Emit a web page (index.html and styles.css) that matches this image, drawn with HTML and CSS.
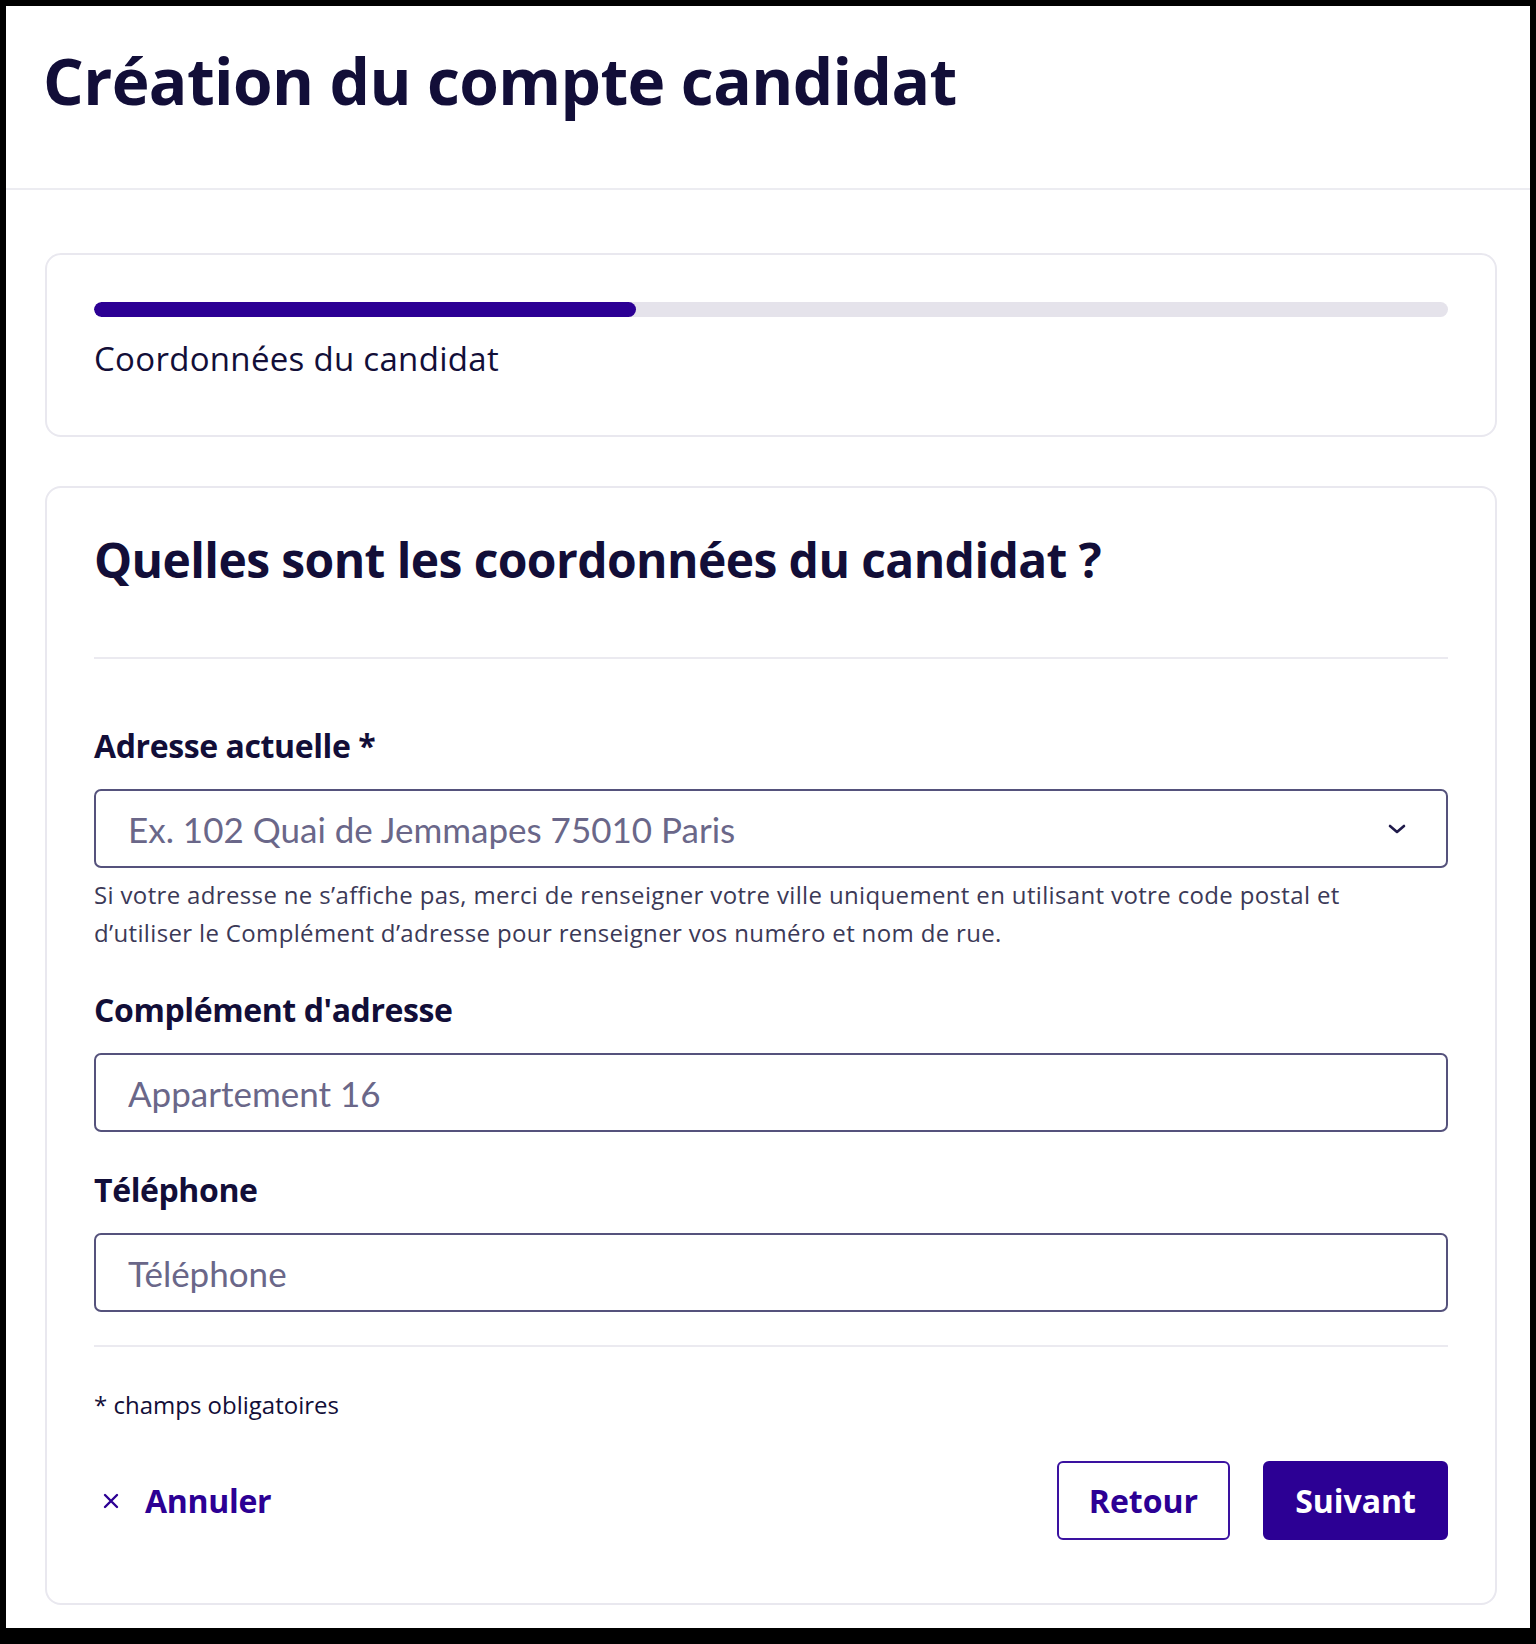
FILE: index.html
```html
<!DOCTYPE html>
<html lang="fr">
<head>
<meta charset="utf-8">
<title>Création du compte candidat</title>
<link rel="stylesheet" href="styles.css">
</head>
<body>
<div class="frame">
  <header class="page-header">
    <h1 class="page-title">Création du compte candidat</h1>
  </header>
  <main class="main">
    <section class="card stepper">
      <div class="progress"><div class="progress-fill" style="width:40%"></div></div>
      <p class="step-label">Coordonnées du candidat</p>
    </section>

    <section class="card form-card">
      <h2 class="form-title">Quelles sont les coordonnées du candidat ?</h2>
      <hr class="divider divider-top">

      <div class="field">
        <label class="label" for="adresse">Adresse actuelle *</label>
        <div class="control">
          <input class="input" id="adresse" type="text" placeholder="Ex. 102 Quai de Jemmapes 75010 Paris">
          <svg class="chevron" width="18" height="10" viewBox="0 0 18 10" aria-hidden="true"><path d="M2 2 L9 8 L16 2" fill="none" stroke="#1f1a4a" stroke-width="2.6" stroke-linecap="round" stroke-linejoin="round"/></svg>
        </div>
        <p class="help">Si votre adresse ne s’affiche pas, merci de renseigner votre ville uniquement en utilisant votre code postal et d’utiliser le Complément d’adresse pour renseigner vos numéro et nom de rue.</p>
      </div>

      <div class="field">
        <label class="label" for="complement">Complément d'adresse</label>
        <div class="control">
          <input class="input" id="complement" type="text" placeholder="Appartement 16">
        </div>
      </div>

      <div class="field">
        <label class="label" for="telephone">Téléphone</label>
        <div class="control">
          <input class="input" id="telephone" type="tel" placeholder="Téléphone">
        </div>
      </div>

      <hr class="divider divider-bottom">

      <p class="note">* champs obligatoires</p>

      <div class="actions">
        <a class="cancel" href="#">
          <svg class="cancel-icon" width="18" height="16" viewBox="0 0 18 16" aria-hidden="true"><path d="M3 2 L15 14 M15 2 L3 14" fill="none" stroke="#2c0094" stroke-width="2.4" stroke-linecap="round"/></svg>
          <span>Annuler</span>
        </a>
        <div class="buttons">
          <button class="btn btn-secondary" type="button">Retour</button>
          <button class="btn btn-primary" type="button">Suivant</button>
        </div>
      </div>
    </section>
  </main>
</div>
</body>
</html>
```

FILE: styles.css
```css
* {
  box-sizing: border-box;
}

html, body {
  margin: 0;
  padding: 0;
}

body {
  background: #000;
  font-family: "Open Sans", "Noto Sans", sans-serif;
  color: #120e38;
  height: 1644px;
  overflow: hidden;
}

.frame {
  margin: 6px 6px 0 6px;
  height: 1622px;
  background: #fff;
  display: flex;
  flex-direction: column;
}

.page-header {
  padding: 36px 33px 69px 37px;
  border-bottom: 2px solid #ececf1;
}

.page-title {
  margin: 0;
  font-size: 64px;
  line-height: 77px;
  font-weight: 700;
  letter-spacing: -0.6px;
  color: #120e38;
}

.main {
  padding: 63px 33px 0 39px;
  display: flex;
  flex-direction: column;
  gap: 49px;
}

.card {
  background: #fff;
  border: 2px solid #e9e8ef;
  border-radius: 16px;
  padding: 0 47px;
}

.stepper {
  padding-top: 47px;
  padding-bottom: 56px;
}

.progress {
  height: 15px;
  border-radius: 8px;
  background: #e5e3eb;
  overflow: hidden;
}

.progress-fill {
  height: 100%;
  border-radius: 8px;
  background: #2c0094;
}

.step-label {
  margin: 22px 0 0;
  font-size: 33px;
  line-height: 40px;
  font-weight: 400;
  letter-spacing: 0.3px;
  color: #120e38;
}

.form-card {
  padding-top: 43px;
  padding-bottom: 63px;
}

.form-title {
  margin: 0;
  font-size: 48px;
  line-height: 58px;
  font-weight: 700;
  letter-spacing: -0.6px;
  color: #120e38;
}

.divider {
  border: 0;
  height: 2px;
  background: #ebeaf0;
  margin: 0;
}

.divider-top {
  margin-top: 68px;
}

.divider-bottom {
  margin-top: 33px;
}

.field {
  display: flex;
  flex-direction: column;
  margin-top: 38px;
}

.divider-top + .field {
  margin-top: 67px;
}

.label {
  font-size: 32px;
  line-height: 40px;
  font-weight: 700;
  letter-spacing: -0.4px;
  color: #120e38;
  margin-bottom: 23px;
}

.control {
  display: flex;
  align-items: center;
  height: 79px;
  border: 2px solid #55527c;
  border-radius: 7px;
  padding: 0 40px 0 32px;
  background: #fff;
}

.input {
  flex: 1;
  min-width: 0;
  border: 0;
  outline: none;
  background: transparent;
  font-family: "Lato", "Open Sans", sans-serif;
  font-size: 35px;
  color: #120e38;
  padding: 0;
  height: 100%;
}

.input::placeholder {
  color: #6a6789;
  opacity: 1;
}

.chevron {
  flex: none;
  display: block;
}

.help {
  margin: 8px 0 0;
  max-width: 1300px;
  font-size: 24px;
  line-height: 38px;
  letter-spacing: 0.35px;
  color: #3b3957;
}

.note {
  margin: 42px 0 0;
  font-size: 24px;
  line-height: 32px;
  color: #120e38;
}

.actions {
  margin-top: 40px;
  display: flex;
  align-items: center;
  justify-content: space-between;
}

.cancel {
  display: flex;
  align-items: center;
  gap: 25px;
  padding-left: 8px;
  color: #2c0094;
  text-decoration: none;
  font-size: 32px;
  font-weight: 700;
  letter-spacing: -0.3px;
}

.cancel-icon {
  display: block;
}

.buttons {
  display: flex;
  gap: 33px;
}

.btn {
  height: 79px;
  padding: 0 30px;
  border-radius: 6px;
  font-family: "Open Sans", "Noto Sans", sans-serif;
  font-size: 32px;
  font-weight: 700;
  cursor: pointer;
}

.btn-secondary {
  background: #fff;
  color: #2c0094;
  border: 2px solid #3a12a0;
}

.btn-primary {
  background: #2c0094;
  color: #fff;
  border: 2px solid #2c0094;
}
```
